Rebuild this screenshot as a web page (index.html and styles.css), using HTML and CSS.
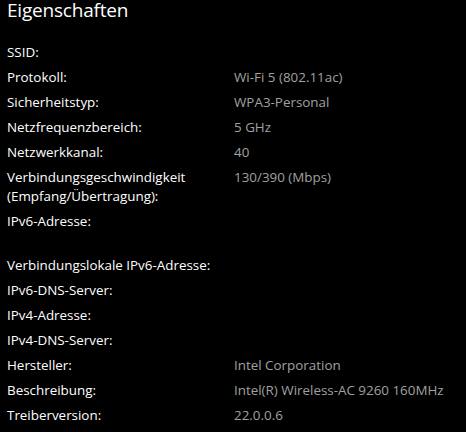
FILE: index.html
```html
<!DOCTYPE html>
<html lang="de">
<head>
<meta charset="utf-8">
<link rel="stylesheet" href="styles.css">
</head>
<body>
<main class="panel">
  <h1 class="title">Eigenschaften</h1>
  <dl class="props">
    <dt>SSID:</dt><dd></dd>
    <dt>Protokoll:</dt><dd>Wi-Fi 5 (802.11ac)</dd>
    <dt>Sicherheitstyp:</dt><dd>WPA3-Personal</dd>
    <dt>Netzfrequenzbereich:</dt><dd>5 GHz</dd>
    <dt>Netzwerkkanal:</dt><dd>40</dd>
    <dt>Verbindungsgeschwindigkeit<br>(Empfang/Übertragung):</dt><dd>130/390 (Mbps)</dd>
    <dt>IPv6-Adresse:<br>&nbsp;</dt><dd></dd>
    <dt>Verbindungslokale IPv6-Adresse:</dt><dd></dd>
    <dt>IPv6-DNS-Server:</dt><dd></dd>
    <dt>IPv4-Adresse:</dt><dd></dd>
    <dt>IPv4-DNS-Server:</dt><dd></dd>
    <dt>Hersteller:</dt><dd>Intel Corporation</dd>
    <dt>Beschreibung:</dt><dd>Intel(R) Wireless-AC 9260 160MHz</dd>
    <dt>Treiberversion:</dt><dd>22.0.0.6</dd>
  </dl>
</main>
</body>
</html>
```
FILE: styles.css
```css
html, body {
  margin: 0;
  padding: 0;
  background: #000;
}
body {
  font-family: "Open Sans", "Noto Sans", sans-serif;
  color: #fff;
}
.panel {
  padding: 0 0 0 7px;
}
.title {
  margin: 0;
  font-size: 19px;
  letter-spacing: -0.2px;
  font-weight: 400;
  line-height: 19px;
  padding-top: 1px;
  height: 42px;
}
.props {
  margin: 0;
  display: grid;
  grid-template-columns: 227px 1fr;
  row-gap: 6px;
  font-size: 13.4px;
  line-height: 19px;
}
.props dt {
  margin: 0;
  color: #fff;
}
.props dd {
  margin: 0;
  color: #a0a0a0;
}
```
